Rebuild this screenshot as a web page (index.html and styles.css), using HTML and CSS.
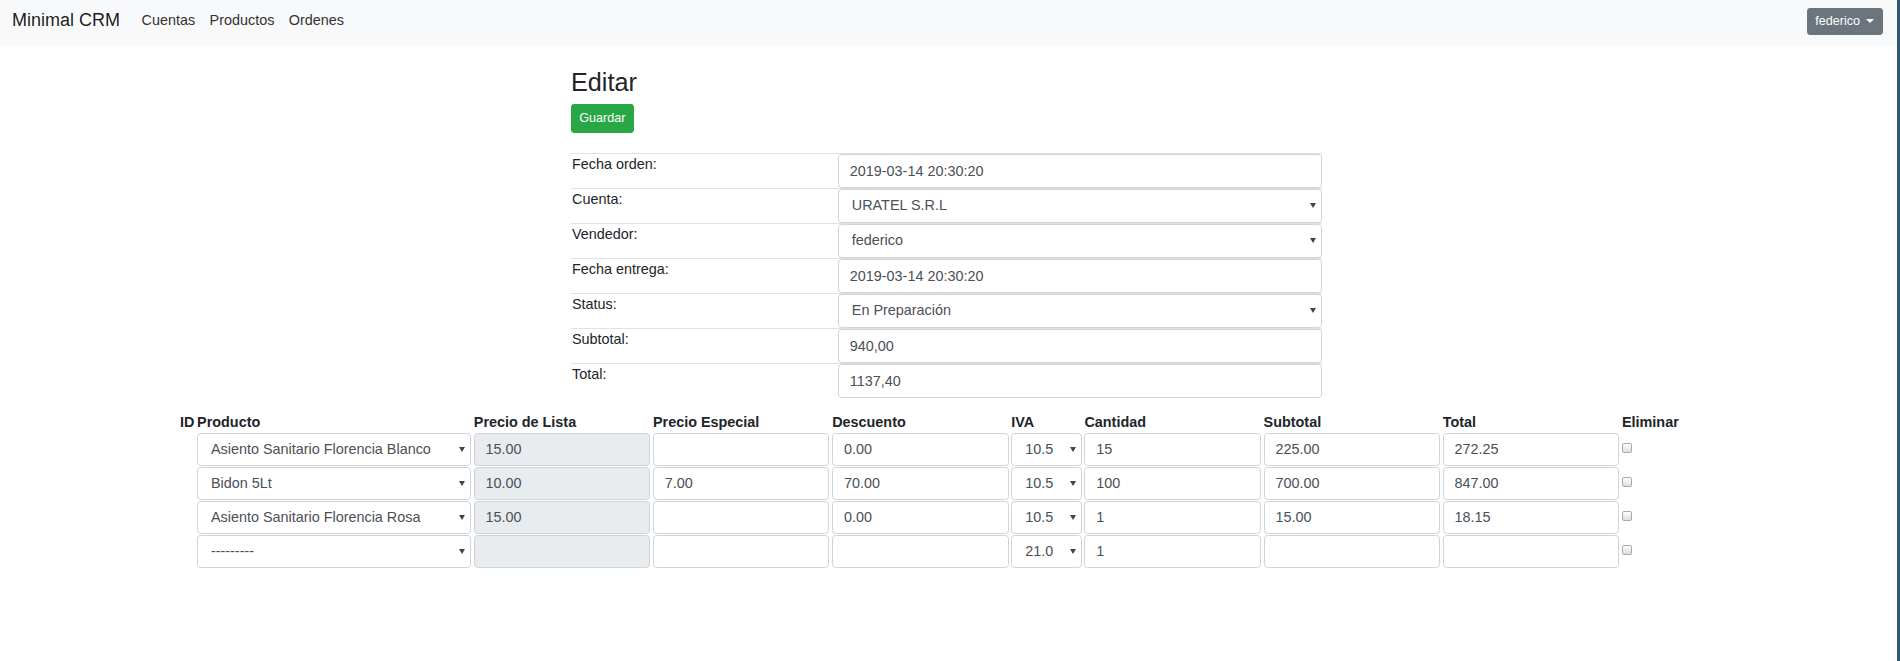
FILE: index.html
```html
<!DOCTYPE html>
<html lang="es">
<head>
<meta charset="utf-8">
<title>Minimal CRM</title>
<link rel="stylesheet" href="styles.css">
</head>
<body>
<nav class="navbar">
  <a class="brand" href="#">Minimal CRM</a>
  <ul class="nav">
    <li><a class="nav-link" href="#">Cuentas</a></li>
    <li><a class="nav-link" href="#">Productos</a></li>
    <li><a class="nav-link" href="#">Ordenes</a></li>
  </ul>
  <button class="user-btn" type="button">federico<span class="caret"></span></button>
</nav>
<main>
  <div class="container">
    <h3 class="title">Editar</h3>
    <button class="btn-save" type="button">Guardar</button>
    <table class="order-form">
      <colgroup><col class="col-label"><col></colgroup>
      <tr><td class="label-cell">Fecha orden:</td><td><input class="field" value="2019-03-14 20:30:20"></td></tr>
      <tr><td class="label-cell">Cuenta:</td><td><select class="field select"><option>URATEL S.R.L</option></select></td></tr>
      <tr><td class="label-cell">Vendedor:</td><td><select class="field select"><option>federico</option></select></td></tr>
      <tr><td class="label-cell">Fecha entrega:</td><td><input class="field" value="2019-03-14 20:30:20"></td></tr>
      <tr><td class="label-cell">Status:</td><td><select class="field select"><option>En Preparación</option></select></td></tr>
      <tr><td class="label-cell">Subtotal:</td><td><input class="field" value="940,00"></td></tr>
      <tr><td class="label-cell">Total:</td><td><input class="field" value="1137,40"></td></tr>
    </table>
  </div>
  <table class="items">
    <thead>
      <tr>
        <th>ID</th><th>Producto</th><th>Precio de Lista</th><th>Precio Especial</th><th>Descuento</th><th>IVA</th><th>Cantidad</th><th>Subtotal</th><th>Total</th><th>Eliminar</th>
      </tr>
    </thead>
    <tbody>
      <tr>
        <td></td>
        <td><select class="field select w-prod"><option>Asiento Sanitario Florencia Blanco</option></select></td>
        <td><input class="field w-num readonly" value="15.00" readonly></td>
        <td><input class="field w-num" value=""></td>
        <td><input class="field w-num" value="0.00"></td>
        <td><select class="field select w-iva"><option>10.5</option></select></td>
        <td><input class="field w-num" value="15"></td>
        <td><input class="field w-num" value="225.00"></td>
        <td><input class="field w-num" value="272.25"></td>
        <td class="del-cell"><input class="check" type="checkbox"></td>
      </tr>
      <tr>
        <td></td>
        <td><select class="field select w-prod"><option>Bidon 5Lt</option></select></td>
        <td><input class="field w-num readonly" value="10.00" readonly></td>
        <td><input class="field w-num" value="7.00"></td>
        <td><input class="field w-num" value="70.00"></td>
        <td><select class="field select w-iva"><option>10.5</option></select></td>
        <td><input class="field w-num" value="100"></td>
        <td><input class="field w-num" value="700.00"></td>
        <td><input class="field w-num" value="847.00"></td>
        <td class="del-cell"><input class="check" type="checkbox"></td>
      </tr>
      <tr>
        <td></td>
        <td><select class="field select w-prod"><option>Asiento Sanitario Florencia Rosa</option></select></td>
        <td><input class="field w-num readonly" value="15.00" readonly></td>
        <td><input class="field w-num" value=""></td>
        <td><input class="field w-num" value="0.00"></td>
        <td><select class="field select w-iva"><option>10.5</option></select></td>
        <td><input class="field w-num" value="1"></td>
        <td><input class="field w-num" value="15.00"></td>
        <td><input class="field w-num" value="18.15"></td>
        <td class="del-cell"><input class="check" type="checkbox"></td>
      </tr>
      <tr>
        <td></td>
        <td><select class="field select w-prod"><option>---------</option></select></td>
        <td><input class="field w-num readonly" value="" readonly></td>
        <td><input class="field w-num" value=""></td>
        <td><input class="field w-num" value=""></td>
        <td><select class="field select w-iva"><option>21.0</option></select></td>
        <td><input class="field w-num" value="1"></td>
        <td><input class="field w-num" value=""></td>
        <td><input class="field w-num" value=""></td>
        <td class="del-cell"><input class="check" type="checkbox"></td>
      </tr>
    </tbody>
  </table>
</main>
</body>
</html>
```

FILE: styles.css
```css
html {
  height: 100%;
  box-sizing: border-box;
  border-right: 3px solid #2e5876;
}

body {
  margin: 0;
  font-family: "Liberation Sans", Arial, sans-serif;
  font-size: 14.4px;
  line-height: 1.5;
  color: #212529;
  background: #fff;
}

/* ---------- navbar ---------- */
.navbar {
  display: flex;
  align-items: flex-start;
  height: 46px;
  box-sizing: border-box;
  padding: 0 14px 0 12px;
  background: #f8f9fa;
}

.brand {
  font-size: 18px;
  line-height: 27px;
  margin-top: 7px;
  margin-right: 14.4px;
  color: rgba(0, 0, 0, 0.9);
  text-decoration: none;
}

.nav {
  display: flex;
  list-style: none;
  margin: 10.2px 0 0;
  padding: 0;
}

.nav-link {
  display: block;
  padding: 0 7.2px;
  line-height: 21.6px;
  color: #333;
  text-decoration: none;
}

.user-btn {
  margin-left: auto;
  margin-top: 8.3px;
  height: 26.4px;
  padding: 0 8px 0 7px;
  border: 1px solid #6c757d;
  border-radius: 2.9px;
  background: #6c757d;
  color: #fff;
  font-family: inherit;
  font-size: 12.6px;
  line-height: 18.9px;
  display: flex;
  align-items: center;
}

.caret {
  display: inline-block;
  margin-left: 6px;
  width: 0;
  height: 0;
  border-top: 4.2px solid #fff;
  border-left: 4px solid transparent;
  border-right: 4px solid transparent;
}

/* ---------- main form ---------- */
.container {
  width: 751px;
  margin: 0 auto;
  padding: 21px 4px 0 0;
}

.title {
  margin: 0 0 7.2px;
  font-size: 25.2px;
  font-weight: 500;
  line-height: 1.2;
}

.btn-save {
  display: block;
  margin: 0 0 20px;
  padding: 3.6px 7.2px;
  border: 1px solid #28a745;
  border-radius: 2.9px;
  background: #28a745;
  color: #fff;
  font-family: inherit;
  font-size: 12.6px;
  line-height: 18.9px;
}

.order-form {
  width: 100%;
  border-collapse: collapse;
  table-layout: fixed;
}

.col-label {
  width: 267px;
}

.order-form td {
  border-top: 1px solid #dee2e6;
  padding: 0;
  vertical-align: top;
}

.label-cell {
  padding: 0 1px !important;
  line-height: 21.6px;
}

.field {
  display: block;
  width: 100%;
  height: 34px;
  box-sizing: border-box;
  margin: 0;
  padding: 5.4px 10.8px;
  border: 1px solid #ced4da;
  border-radius: 3.6px;
  background-color: #fff;
  color: #495057;
  font-family: inherit;
  font-size: 14.4px;
  line-height: 21.6px;
}

.select {
  -webkit-appearance: none;
  appearance: none;
  padding-left: 12.8px;
  padding-right: 18px;
  background-image: url("data:image/svg+xml,%3Csvg xmlns='http://www.w3.org/2000/svg' width='6' height='5' viewBox='0 0 6 5'%3E%3Cpath d='M0 0h6L3 5z' fill='%23444'/%3E%3C/svg%3E");
  background-repeat: no-repeat;
  background-position: right 5px center;
  background-size: 6px 5px;
}

/* ---------- items table ---------- */
.items {
  margin: 14px 0 0 178px;
  border-collapse: separate;
  border-spacing: 2px 1px;
}

.items th {
  padding: 0 0.7px 0 0;
  text-align: left;
  font-weight: bold;
  line-height: 19.2px;
  white-space: nowrap;
  vertical-align: bottom;
}

.items td {
  padding: 0 0.7px 0 0;
  vertical-align: middle;
}

.items .field {
  height: 33px;
}

.w-prod {
  width: 274px;
}

.w-num {
  width: 176.5px;
}

.w-iva {
  width: 70.4px;
}

.readonly {
  background-color: #e9ecef;
}

.check {
  -webkit-appearance: none;
  appearance: none;
  display: block;
  width: 10px;
  height: 10px;
  margin: 0 0 3px 0;
  border: 1px solid #a9a9a9;
  border-radius: 2px;
  background: linear-gradient(#fdfdfd, #dedede);
}
```
